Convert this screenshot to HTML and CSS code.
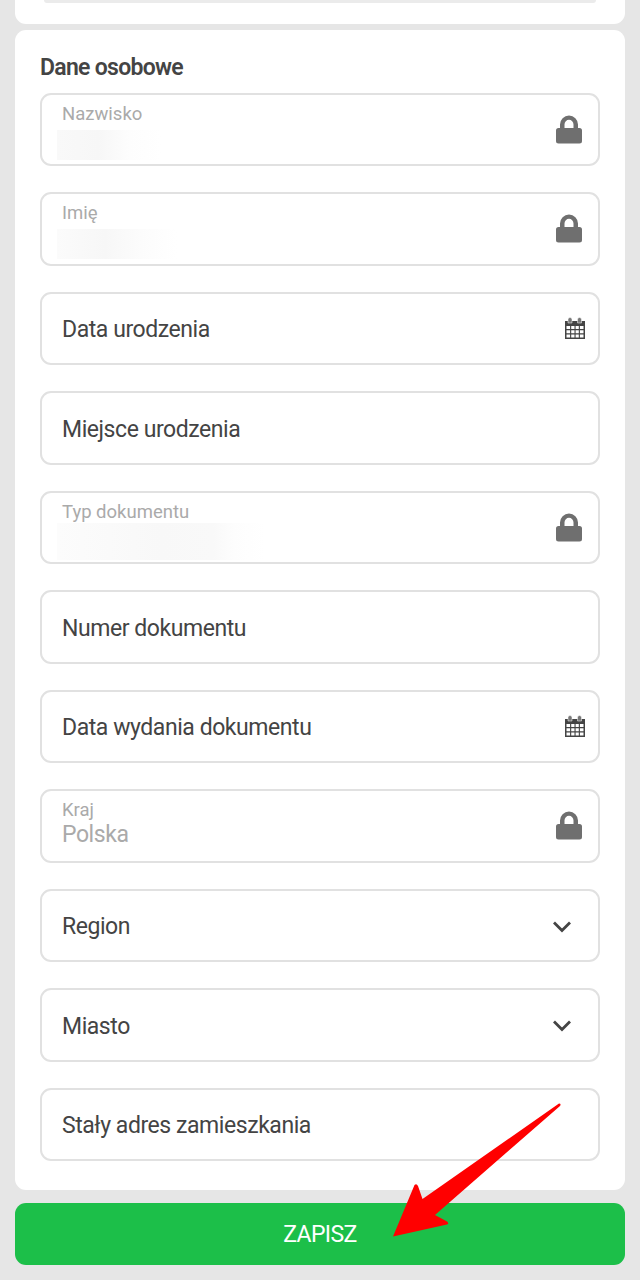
FILE: index.html
```html
<!DOCTYPE html>
<html lang="pl">
<head>
    <meta charset="UTF-8">
    <meta name="viewport" content="width=device-width, initial-scale=1.0">
    <title>Dane osobowe</title>
    <link rel="stylesheet" href="styles.css">
</head>
<body>

    <svg class="sprite" width="0" height="0">
        <symbol id="lock" viewBox="0 0 28 30">
            <path fill-rule="evenodd" d="M5 13V9.500a9 9 0 0 1 18 0V13h1.500a2.500 2.500 0 0 1 2.500 2.500V26a2.500 2.500 0 0 1-2.500 2.500h-21A2.500 2.500 0 0 1 1 26V15.500A2.500 2.500 0 0 1 3.500 13zM9.500 13h9V9.500a4.500 4.700 0 0 0-9 0z"/>
        </symbol>
        <symbol id="calendar" viewBox="0 0 22 23">
            <path fill-rule="evenodd" d="M1 4h20v18H1zM2.500 9v3h3.600V9zM7.200 9v3h3.300V9zM11.600 9v3h3.200V9zM15.900 9v3h3.600V9zM2.500 13.200v3h3.600v-3zM7.200 13.200v3h3.300v-3zM11.600 13.200v3h3.200v-3zM15.900 13.200v3h3.600v-3zM2.500 17.400v3.200h3.600v-3.200zM7.200 17.400v3.200h3.300v-3.200zM11.600 17.400v3.200h3.200v-3.200zM15.900 17.400v3.200h3.600v-3.200z"/>
            <path class="ring" d="M4 6V2.500a2 2 0 0 1 4 0V6zM13.500 6V2.500a2 2 0 0 1 4 0V6z"/>
        </symbol>
        <symbol id="chevron" viewBox="0 0 20 14">
            <path d="M2 2.500l8 8 8-8" fill="none" stroke="#444" stroke-width="2.800"/>
        </symbol>
    </svg>

    <div class="card previous">
        <div class="field"></div>
    </div>

    <form class="card">
        <h2>Dane osobowe</h2>
        <div class="fields">
            <div class="field locked">
                <div class="text">
                    <span class="label">Nazwisko</span>
                    <span class="hidden-value surname"></span>
                </div>
                <svg class="lock"><use href="#lock"/></svg>
            </div>
            <div class="field locked">
                <div class="text">
                    <span class="label">Imię</span>
                    <span class="hidden-value name"></span>
                </div>
                <svg class="lock"><use href="#lock"/></svg>
            </div>
            <div class="field">
                <span>Data urodzenia</span>
                <svg class="calendar"><use href="#calendar"/></svg>
            </div>
            <div class="field">
                <span>Miejsce urodzenia</span>
            </div>
            <div class="field locked">
                <div class="text">
                    <span class="label">Typ dokumentu</span>
                    <span class="hidden-value document"></span>
                </div>
                <svg class="lock"><use href="#lock"/></svg>
            </div>
            <div class="field">
                <span>Numer dokumentu</span>
            </div>
            <div class="field">
                <span>Data wydania dokumentu</span>
                <svg class="calendar"><use href="#calendar"/></svg>
            </div>
            <div class="field locked">
                <div class="text">
                    <span class="label">Kraj</span>
                    <span class="value">Polska</span>
                </div>
                <svg class="lock"><use href="#lock"/></svg>
            </div>
            <div class="field">
                <span>Region</span>
                <svg class="chevron"><use href="#chevron"/></svg>
            </div>
            <div class="field">
                <span>Miasto</span>
                <svg class="chevron"><use href="#chevron"/></svg>
            </div>
            <div class="field">
                <span>Stały adres zamieszkania</span>
            </div>
        </div>
    </form>

    <button class="save" type="button">ZAPISZ</button>

    <svg class="arrow" viewBox="0 0 170 136">
        <path d="M166 1.500Q168.500 1.500 167 4L42 113 54 119.500Q56.500 121.500 54 122.500L0 134.500 21.500 83Q23.500 81 25 84L29.500 97Z"/>
    </svg>

</body>
</html>
```
FILE: styles.css
```css
* {
    box-sizing: border-box;
}
body {
    margin: 0;
    padding: 0 15px;
    height: 1280px;
    overflow: hidden;
    background-color: #e6e6e6;
    font-family: Roboto, sans-serif;
    font-size: 23px;
    letter-spacing: -0.440px;
    color: #444;
}
.sprite {
    display: block;
}
.card {
    height: 1160px;
    padding: 25px 25px 0;
    background-color: #fff;
    border-radius: 11px;
}
.card.previous {
    height: 24px;
    margin-bottom: 6px;
    padding: 0 29px;
    border-radius: 0 0 11px 11px;
}
.card.previous .field {
    height: 3px;
    padding: 0;
    border-width: 0 0 3px;
    border-color: #ebebeb;
    border-radius: 0 0 11px 11px;
}
h2 {
    margin: 0;
    height: 38px;
    font-size: 23px;
    line-height: 25px;
    font-weight: 600;
    letter-spacing: -0.700px;
}
.fields {
    display: flex;
    flex-direction: column;
    gap: 26.100px;
}
.field {
    display: flex;
    align-items: center;
    justify-content: space-between;
    height: 73.400px;
    padding: 2px 12px 0 20px;
    border: 2px solid #e1e1e1;
    border-radius: 11px;
}
.locked {
    align-items: stretch;
    padding-top: 0;
    color: #aaa;
}
.text {
    display: flex;
    flex-direction: column;
    padding-top: 8px;
}
.label {
    font-size: 18.500px;
    line-height: 22px;
    letter-spacing: 0;
}
.value {
    line-height: 27px;
}
.hidden-value {
    height: 30px;
    margin: 5px 0 0 -5px;
}
.surname {
    width: 104px;
    background: linear-gradient(90deg, #f9f9f9, #f7f7f7 40%, #fdfdfd 70%, #fff);
}
.name {
    width: 120px;
    background: linear-gradient(90deg, #fbfbfb, #f7f7f7 40%, #fcfcfc 70%, #fff);
}
.document {
    width: 208px;
    height: 37px;
    margin-top: 0;
    background: linear-gradient(90deg, #fcfcfc, #f8f8f8 50%, #f9f9f9 75%, #fdfdfd 85%, #fff);
}
.lock {
    width: 28px;
    height: 30px;
    margin: 20px 3px 0 0;
    fill: #6f6f6f;
}
.calendar {
    width: 22px;
    height: 23px;
    margin-top: -2px;
    fill: #444;
}
.ring {
    fill: #777;
    stroke: #fff;
    stroke-width: 0.500;
}
.chevron {
    width: 20px;
    height: 14px;
    margin-right: 14px;
}
.save {
    display: block;
    width: 100%;
    height: 62px;
    margin-top: 13px;
    padding: 0;
    border: none;
    border-radius: 11px;
    background-color: #1cbf49;
    color: #fff;
    font-family: inherit;
    font-size: 23px;
    letter-spacing: -0.600px;
}
/* pointer drawn over the form and the button */
.arrow {
    position: absolute;
    left: 393px;
    top: 1102px;
    width: 170px;
    height: 136px;
    fill: #f00;
}
```
